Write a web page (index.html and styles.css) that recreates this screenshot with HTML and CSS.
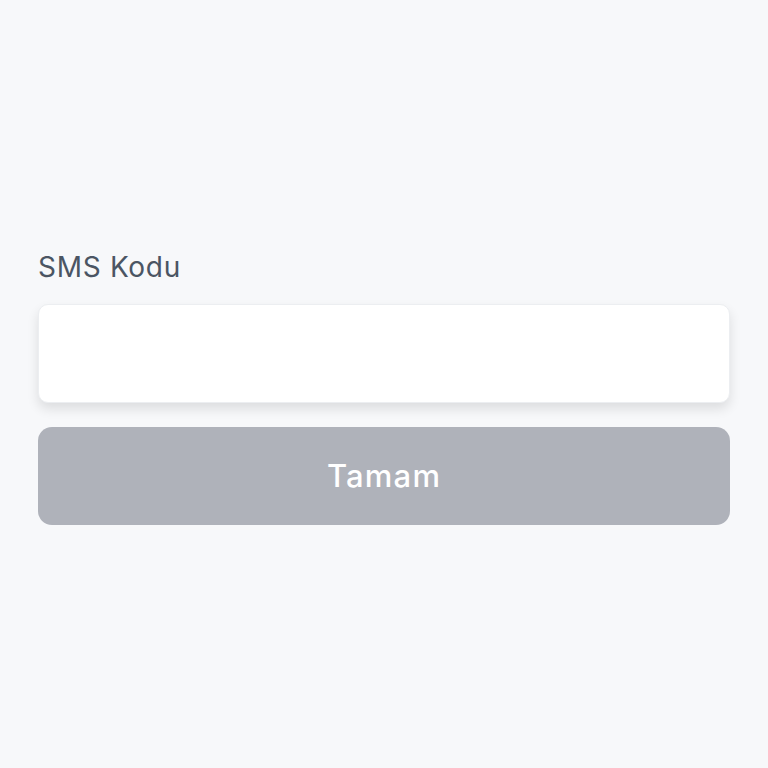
FILE: index.html
```html
<!DOCTYPE html>
<html lang="tr">
<head>
    <meta charset="UTF-8">
    <meta name="viewport" content="width=device-width, initial-scale=1.0">
    <title>SMS Kodu</title>
    <link rel="stylesheet" href="styles.css">
</head>
<body>
<div class="sms-form">
    <label for="smsCode" class="sms-label">SMS Kodu</label>
    <input type="text" id="smsCode" class="sms-input">
    <button class="sms-button">Tamam</button>
</div>
</body>
</html>
```

FILE: styles.css
```css
html, body {
    height: 100%;
}
body {
    margin: 0;
    background-color: #f7f8fa;
    font-family: Inter, 'Open Sans', sans-serif;
    display: flex;
    flex-direction: column;
    justify-content: center;
}
.sms-form {
    display: flex;
    flex-direction: column;
    padding: 0 38px;
    margin-top: 7px;
}
.sms-label {
    font-size: 28px;
    color: #4b5563;
    margin-bottom: 21px;
    line-height: 32px;
    letter-spacing: 0.7px;
}
.sms-input {
    height: 99px;
    box-sizing: border-box;
    border: 1px solid #eceef1;
    border-radius: 10px;
    background-color: #ffffff;
    box-shadow: 0 6px 12px rgba(0, 0, 0, 0.11);
    margin-bottom: 24px;
    font-size: 26px;
    padding: 0 20px;
    outline: none;
}
.sms-button {
    height: 98px;
    border: none;
    border-radius: 14px;
    background-color: #afb2ba;
    color: #ffffff;
    font-family: Inter, 'Open Sans', sans-serif;
    font-size: 31px;
    font-weight: 500;
    letter-spacing: 1.2px;
}
```
